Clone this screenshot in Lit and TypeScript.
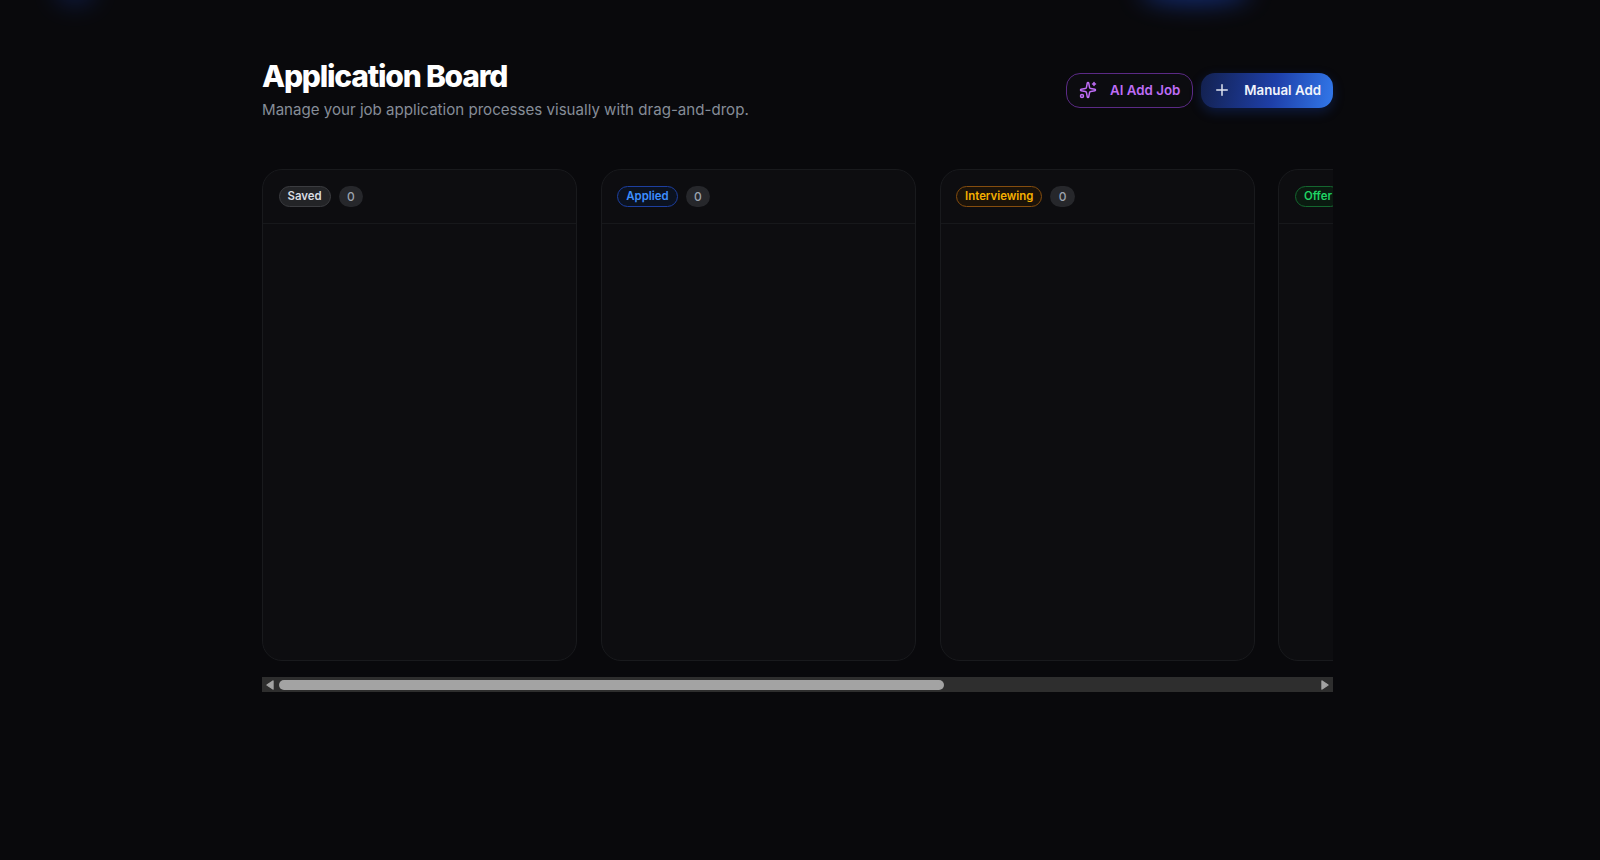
import { LitElement, html, css, svg } from "lit";
import { customElement } from "lit/decorators.js";

const COLUMNS = [
  { name: "Saved", cls: "saved" },
  { name: "Applied", cls: "applied" },
  { name: "Interviewing", cls: "interviewing" },
  { name: "Offer", cls: "offer" },
];

@customElement("app-root")
export class AppRoot extends LitElement {
  static styles = css`
    :host {
      display: block;
      position: relative;
      min-height: 860px;
      overflow: hidden;
      background: #09090c;
      color: #fff;
      font-family: Inter, "Liberation Sans", sans-serif;
    }
    .glow { position: absolute; top: -22px; height: 26px; border-radius: 50%; background: #1d4ed8; filter: blur(12px); opacity: 0.5; }
    .glow.a { left: 55px; width: 40px; opacity: 0.28; }
    .glow.b { left: 1140px; width: 110px; }
    main { width: 1071px; margin-left: 262px; padding-top: 59px; display: flex; flex-direction: column; }
    header { display: flex; justify-content: space-between; align-items: center; height: 61px; margin-bottom: 49px; }
    h1 { margin: 0 0 6px; font-size: 30px; line-height: 34px; font-weight: 800; letter-spacing: -1.2px; color: #fff; }
    .sub { margin: 0; font-size: 15.1px; line-height: 21px; color: #868d98; }
    .actions { display: flex; gap: 8px; padding-top: 1px; }
    .btn { display: flex; align-items: center; gap: 13px; height: 35px; box-sizing: border-box; padding: 0 12px; border-radius: 14px; font-size: 13.3px; font-weight: 600; }
    .btn svg { width: 18px; height: 18px; flex: none; fill: none; stroke: currentColor; stroke-width: 2; stroke-linecap: round; stroke-linejoin: round; }
    .ai { border: 1px solid #5b2a86; background: #0c0c10; color: #bf6cf6; }
    .manual { background: linear-gradient(100deg, #13214f, #1e3fa8 55%, #3278ea); box-shadow: 0 4px 12px rgba(29, 78, 216, 0.25); color: #f1f4fb; }
    .manual svg { color: #dfe4ef; }
    .board { display: flex; gap: 23.8px; overflow: hidden; padding-bottom: 16px; }
    .col { flex: 0 0 315px; height: 492px; box-sizing: border-box; border: 1px solid #191a1d; border-radius: 20px; background: #0d0d10; }
    .col-head { display: flex; align-items: center; gap: 8px; height: 54px; box-sizing: border-box; padding: 0 15.5px 1px; border-bottom: 1px solid #17181b; }
    .pill { height: 21px; box-sizing: border-box; padding: 0 8px; display: flex; align-items: center; border-radius: 11px; border: 1px solid; font-size: 11.4px; font-weight: 600; }
    .saved { color: #d9dce1; background: #232427; border-color: #3b3c40; }
    .applied { color: #3d8eff; background: #0b1220; border-color: #1d3fa0; }
    .interviewing { color: #f5b000; background: #1a1209; border-color: #854d0e; }
    .offer { color: #1fd463; background: #0a1a10; border-color: #14672f; }
    .count { min-width: 24.5px; height: 21px; padding: 0 4px; box-sizing: border-box; display: flex; align-items: center; justify-content: center; border-radius: 11px; background: #26272b; color: #9ca3af; font-size: 12px; font-weight: 500; }
    .scrollbar { display: flex; align-items: center; height: 15px; background: #2e2e2e; }
    .scrollbar svg { flex: none; width: 8px; height: 10px; fill: #a3a3a3; stroke: #a3a3a3; stroke-width: 1.4; stroke-linejoin: round; }
    .arrow-l { margin: 0 5px 0 4px; }
    .arrow-r { margin: 0 4px 0 auto; }
    .thumb { width: 665px; height: 10px; border-radius: 5px; background: #a3a3a3; }
  `;

  render() {
    return html`
      <div class="glow a"></div>
      <div class="glow b"></div>
      <main>
        <header>
          <div>
            <h1>Application Board</h1>
            <p class="sub">Manage your job application processes visually with drag-and-drop.</p>
          </div>
          <div class="actions">
            <div class="btn ai">
              <svg viewBox="0 0 24 24">
                ${svg`<path d="M11.017 2.814a1 1 0 0 1 1.966 0l1.051 5.558a2 2 0 0 0 1.594 1.594l5.558 1.051a1 1 0 0 1 0 1.966l-5.558 1.051a2 2 0 0 0-1.594 1.594l-1.051 5.558a1 1 0 0 1-1.966 0l-1.051-5.558a2 2 0 0 0-1.594-1.594l-5.558-1.051a1 1 0 0 1 0-1.966l5.558-1.051a2 2 0 0 0 1.594-1.594z"/><path d="M20 2v4"/><path d="M22 4h-4"/><circle cx="4" cy="20" r="2"/>`}
              </svg>
              AI Add Job
            </div>
            <div class="btn manual">
              <svg viewBox="0 0 24 24">${svg`<path d="M5 12h14"/><path d="M12 5v14"/>`}</svg>
              Manual Add
            </div>
          </div>
        </header>
        <div class="board">
          ${COLUMNS.map(
            (c) => html`
              <section class="col">
                <div class="col-head">
                  <span class="pill ${c.cls}">${c.name}</span>
                  <span class="count">0</span>
                </div>
              </section>
            `
          )}
        </div>
        <div class="scrollbar">
          <svg class="arrow-l" viewBox="0 0 8 10">${svg`<path d="M7 1 1 5l6 4z"/>`}</svg>
          <span class="thumb"></span>
          <svg class="arrow-r" viewBox="0 0 8 10">${svg`<path d="M1 1l6 4-6 4z"/>`}</svg>
        </div>
      </main>
    `;
  }
}
